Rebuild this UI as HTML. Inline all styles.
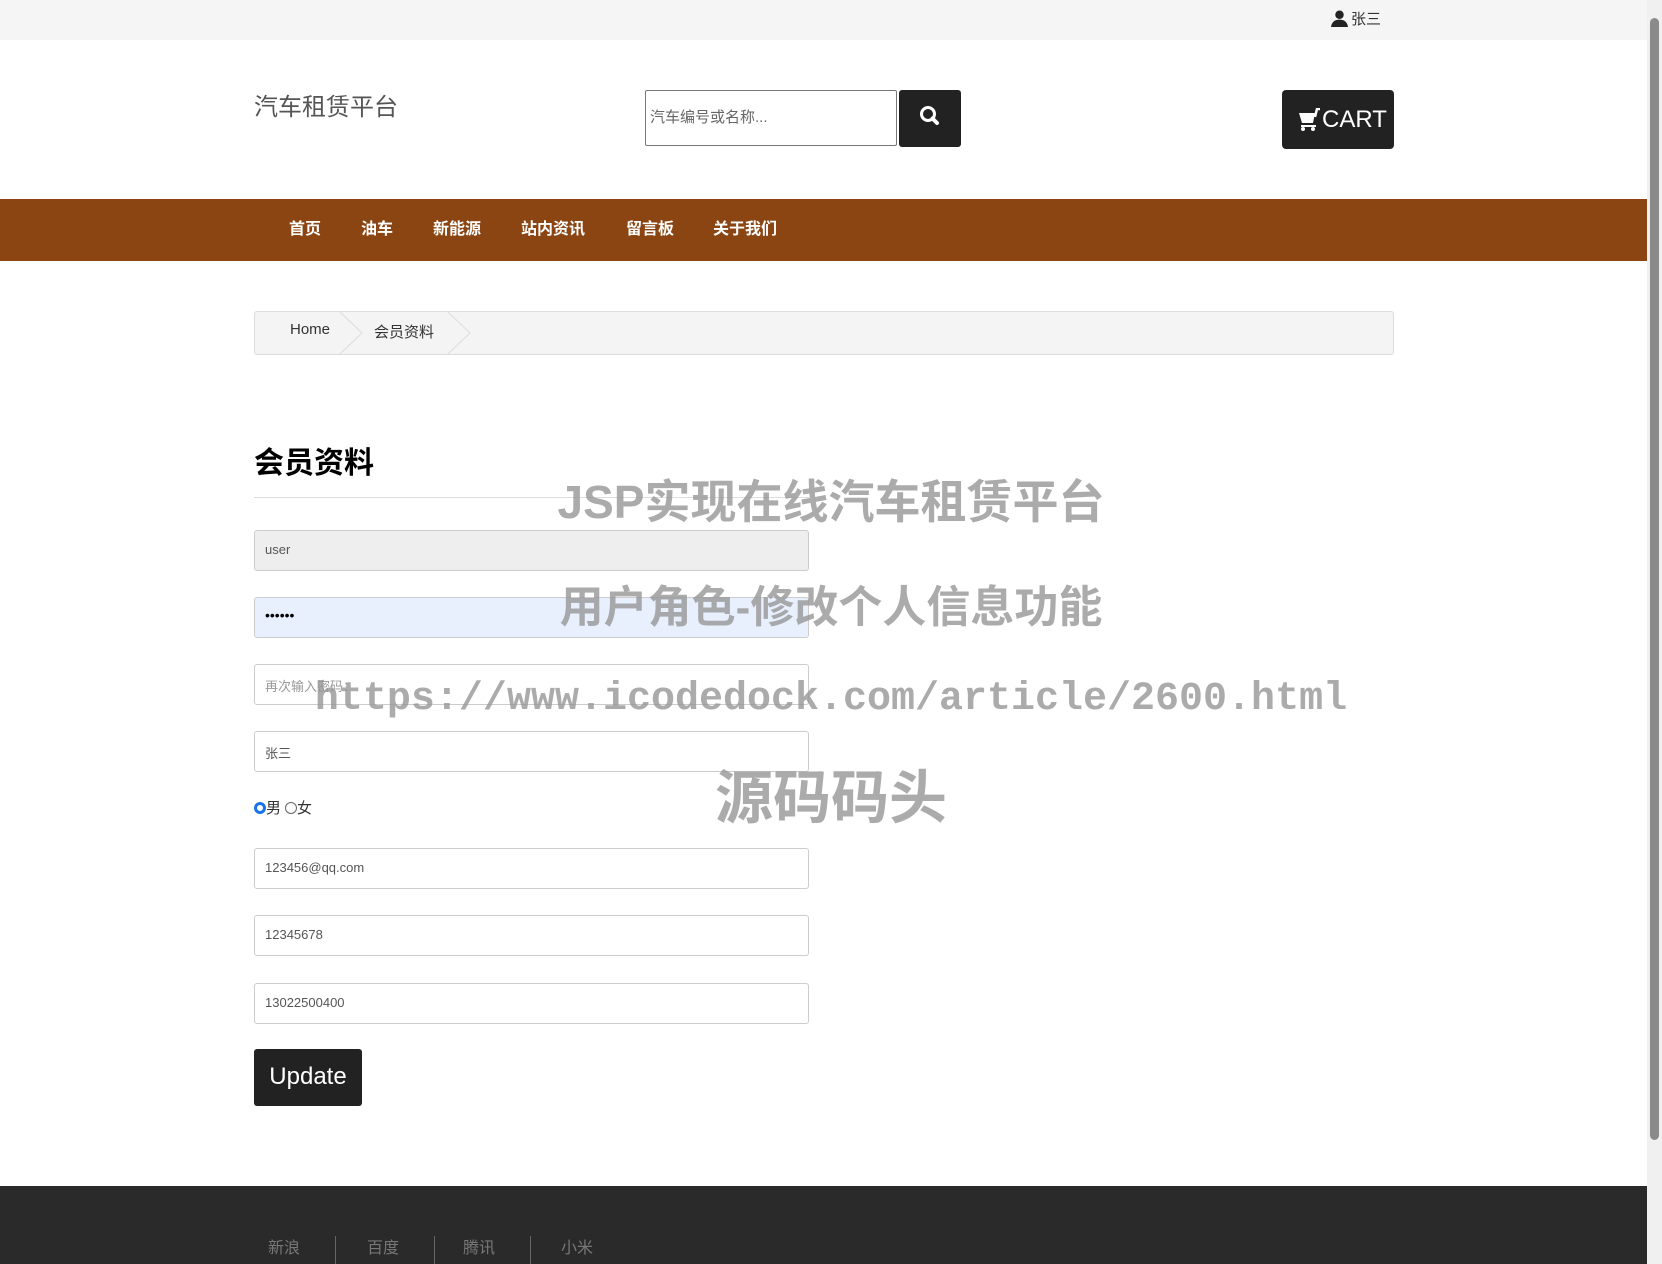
<!DOCTYPE html>
<html><head><meta charset="utf-8">
<style>
*{box-sizing:border-box;margin:0;padding:0}
body{width:1662px;height:1264px;position:relative;overflow:hidden;background:#fff;font-family:"Liberation Sans","Noto Sans CJK SC",sans-serif;color:#333}
.abs{position:absolute}
.top{left:0;top:0;width:1647px;height:40px;background:#f5f5f5}
.user{left:1331px;top:8px;font-size:15px;color:#333;display:flex;align-items:center;gap:3px}
.logo{left:254px;top:87px;font-size:24px;color:#555}
.search{left:645px;top:90px;width:252px;height:56px;border:1px solid #777;border-radius:2px;font-size:15px;color:#666;padding:15px 4px}
.sbtn{left:899px;top:90px;width:62px;height:57px;background:#222;border-radius:3px}
.cart{left:1282px;top:90px;width:112px;height:59px;background:#222;border-radius:4px;color:#fff;font-size:24px;display:flex;align-items:center;padding-left:16px}
.nav{left:0;top:199px;width:1647px;height:62px;background:#8b4513}
.nav span{position:absolute;top:16px;color:#fff;font-size:16px;font-weight:bold}
.bc{left:254px;top:311px;width:1140px;height:44px;background:#f4f4f4;border:1px solid #ddd;border-radius:3px}
.bc span{position:absolute;top:9px;font-size:15px;color:#333}
h1{position:absolute;left:254px;top:438px;font-size:30px;font-weight:bold;color:#000}
.hr{left:254px;top:497px;width:555px;height:1px;background:#ddd}
.in{left:254px;width:555px;height:41px;border:1px solid #ccc;border-radius:3px;font-size:13px;color:#555;padding:11px 10px;background:#fff}
.upd{left:254px;top:1049px;width:108px;height:57px;background:#222;border-radius:3px;color:#fff;font-size:24px;text-align:center;line-height:55px}
.foot{left:0;top:1186px;width:1647px;height:78px;background:#2a2a2a}
.foot span{position:absolute;top:48px;font-size:16px;color:#777}
.sep{position:absolute;top:50px;width:1px;height:28px;background:#666}
.wm{position:absolute;color:rgba(150,150,150,.8);font-weight:bold;white-space:nowrap;text-align:center;left:0;width:1662px}
.sb{left:1647px;top:0;width:15px;height:1264px;background:#f0f0f0}
.thumb{left:1650px;top:18px;width:9px;height:1122px;background:#8a8a8a;border-radius:5px}
</style></head><body>
<div class="abs top"></div>
<div class="abs user"><svg width="17" height="17" viewBox="0 0 16 16"><circle cx="8" cy="4.5" r="4" fill="#222"/><path d="M0 16 Q1 9 8 9 Q15 9 16 16Z" fill="#222"/></svg>张三</div>
<div class="abs logo">汽车租赁平台</div>
<div class="abs search">汽车编号或名称...</div>
<div class="abs sbtn"><svg width="62" height="57" viewBox="0 0 62 57"><circle cx="29" cy="24" r="6.5" stroke="#fff" stroke-width="3" fill="none"/><path d="M33.5 28.5 L38 33" stroke="#fff" stroke-width="4" stroke-linecap="round"/></svg></div>
<div class="abs cart"><svg width="24" height="24" viewBox="0 0 24 24"><path d="M1 5 H17 L15 15 H4 Z" fill="#fff"/><path d="M17 9 L19 1 H22" stroke="#fff" stroke-width="2.5" fill="none"/><path d="M3 18 H18" stroke="#fff" stroke-width="2"/><circle cx="5" cy="21" r="2" fill="#fff"/><circle cx="15" cy="21" r="2" fill="#fff"/></svg>CART</div>
<div class="abs nav"><span style="left:289px">首页</span><span style="left:361px">油车</span><span style="left:433px">新能源</span><span style="left:521px">站内资讯</span><span style="left:626px">留言板</span><span style="left:713px">关于我们</span></div>
<div class="abs bc"><span style="left:35px">Home</span>
<svg class="abs" style="left:85px;top:0" width="24" height="42"><path d="M0 0 L22 21 L0 42" stroke="#ddd" fill="none"/></svg>
<span style="left:119px">会员资料</span>
<svg class="abs" style="left:193px;top:0" width="24" height="42"><path d="M0 0 L22 21 L0 42" stroke="#ddd" fill="none"/></svg></div>
<h1>会员资料</h1>
<div class="abs hr"></div>
<div class="abs in" style="top:530px;background:#eee">user</div>
<div class="abs in" style="top:597px;background:#e8f0fe;color:#000;font-size:14px;padding-top:9px">••••••</div>
<div class="abs in" style="top:664px;color:#999">再次输入密码：</div>
<div class="abs in" style="top:731px">张三</div>
<div class="abs" style="left:254px;top:797px;font-size:15px;display:flex;align-items:center"><span style="display:inline-block;width:12px;height:12px;border-radius:50%;border:3px solid #1a73e8;background:#fff;box-shadow:inset 0 0 0 2px #fff"></span>男<span style="display:inline-block;width:12px;height:12px;border-radius:50%;border:1px solid #666;margin-left:4px"></span>女</div>
<div class="abs in" style="top:848px">123456@qq.com</div>
<div class="abs in" style="top:915px">12345678</div>
<div class="abs in" style="top:983px">13022500400</div>
<div class="abs upd">Update</div>
<div class="abs foot"><span style="left:268px">新浪</span><div class="sep" style="left:335px"></div><span style="left:367px">百度</span><div class="sep" style="left:434px"></div><span style="left:463px">腾讯</span><div class="sep" style="left:530px"></div><span style="left:561px">小米</span></div>
<div class="wm" style="top:466px;font-size:46px">JSP实现在线汽车租赁平台</div>
<div class="wm" style="top:571px;font-size:44px">用户角色-修改个人信息功能</div>
<div class="wm" style="top:677px;font-size:40px;font-family:'Liberation Mono',monospace">https://www.icodedock.com/article/2600.html</div>
<div class="wm" style="top:751px;font-size:58px">源码码头</div>
<div class="abs sb"></div><div class="abs thumb"></div>
</body></html>
